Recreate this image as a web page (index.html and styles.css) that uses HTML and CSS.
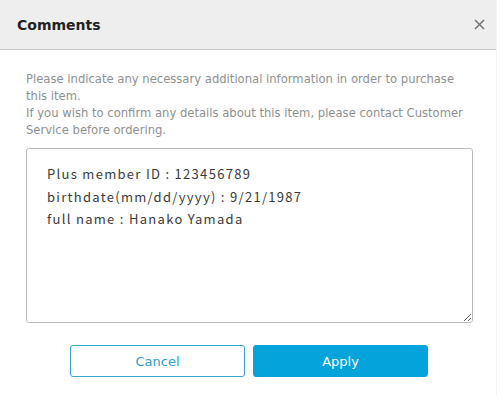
FILE: index.html
```html
<!DOCTYPE html>
<html lang="en">
<head>
    <meta charset="UTF-8">
    <meta name="viewport" content="width=device-width, initial-scale=1.0">
    <title>Comments</title>
    <link rel="stylesheet" href="styles.css">
</head>
<body>
    <div class="modal">
        <div class="modal-header">
            <h2 class="modal-title">Comments</h2>
            <button type="button" class="close-btn" aria-label="Close">
                <svg width="11" height="11" viewBox="0 0 11 11">
                    <path d="M1 1 L10 10 M10 1 L1 10" stroke="#777" stroke-width="1.6" fill="none"/>
                </svg>
            </button>
        </div>
        <div class="modal-body">
            <p class="note">Please indicate any necessary additional information in order to purchase this item.<br>If you wish to confirm any details about this item, please contact Customer Service before ordering.</p>
            <textarea class="comment-box">Plus member ID : 123456789
birthdate(mm/dd/yyyy) : 9/21/1987
full name : Hanako Yamada</textarea>
            <div class="actions">
                <button type="button" class="btn btn-cancel">Cancel</button>
                <button type="button" class="btn btn-apply">Apply</button>
            </div>
        </div>
    </div>
</body>
</html>
```

FILE: styles.css
```css
body {
    margin: 0;
    background-color: #ffffff;
    font-family: "DejaVu Sans", Verdana, sans-serif;
}

.modal {
    width: 496px;
    height: 395px;
    background-color: #fff;
    border-right: 1px solid #f0f0f0;
}

.modal-header {
    display: flex;
    justify-content: space-between;
    align-items: center;
    height: 50px;
    padding: 0 11px 0 17px;
    background-color: #eeeeee;
    border-bottom: 1px solid #c8c8c8;
    box-sizing: border-box;
}

.modal-title {
    margin: 0;
    font-size: 14px;
    font-weight: bold;
    color: #222;
}

.close-btn {
    border: none;
    background: none;
    padding: 0;
    display: flex;
    cursor: pointer;
}

.modal-body {
    padding: 21px 24px 0 26px;
}

.note {
    margin: 0;
    font-size: 11.6px;
    line-height: 17px;
    color: #8f8f8f;
}

.comment-box {
    display: block;
    width: 447px;
    height: 175px;
    margin-top: 9px;
    padding: 14px 20px;
    box-sizing: border-box;
    border: 1px solid #bbb;
    border-radius: 3px;
    font-family: "Noto Sans CJK JP", sans-serif;
    font-size: 13px;
    line-height: 22.5px;
    letter-spacing: 1.3px;
    color: #3a3a3a;
    resize: both;
}

.actions {
    display: flex;
    gap: 8px;
    margin-top: 22px;
    padding-left: 44px;
}

.btn {
    width: 175px;
    height: 32px;
    border-radius: 3px;
    font-family: "DejaVu Sans", Verdana, sans-serif;
    font-size: 13px;
    cursor: pointer;
}

.btn-cancel {
    background-color: #fff;
    border: 1px solid #3aa6cc;
    color: #2e9dc8;
}

.btn-apply {
    background-color: #04a3dc;
    border: 1px solid #04a3dc;
    color: #fff;
}
```
